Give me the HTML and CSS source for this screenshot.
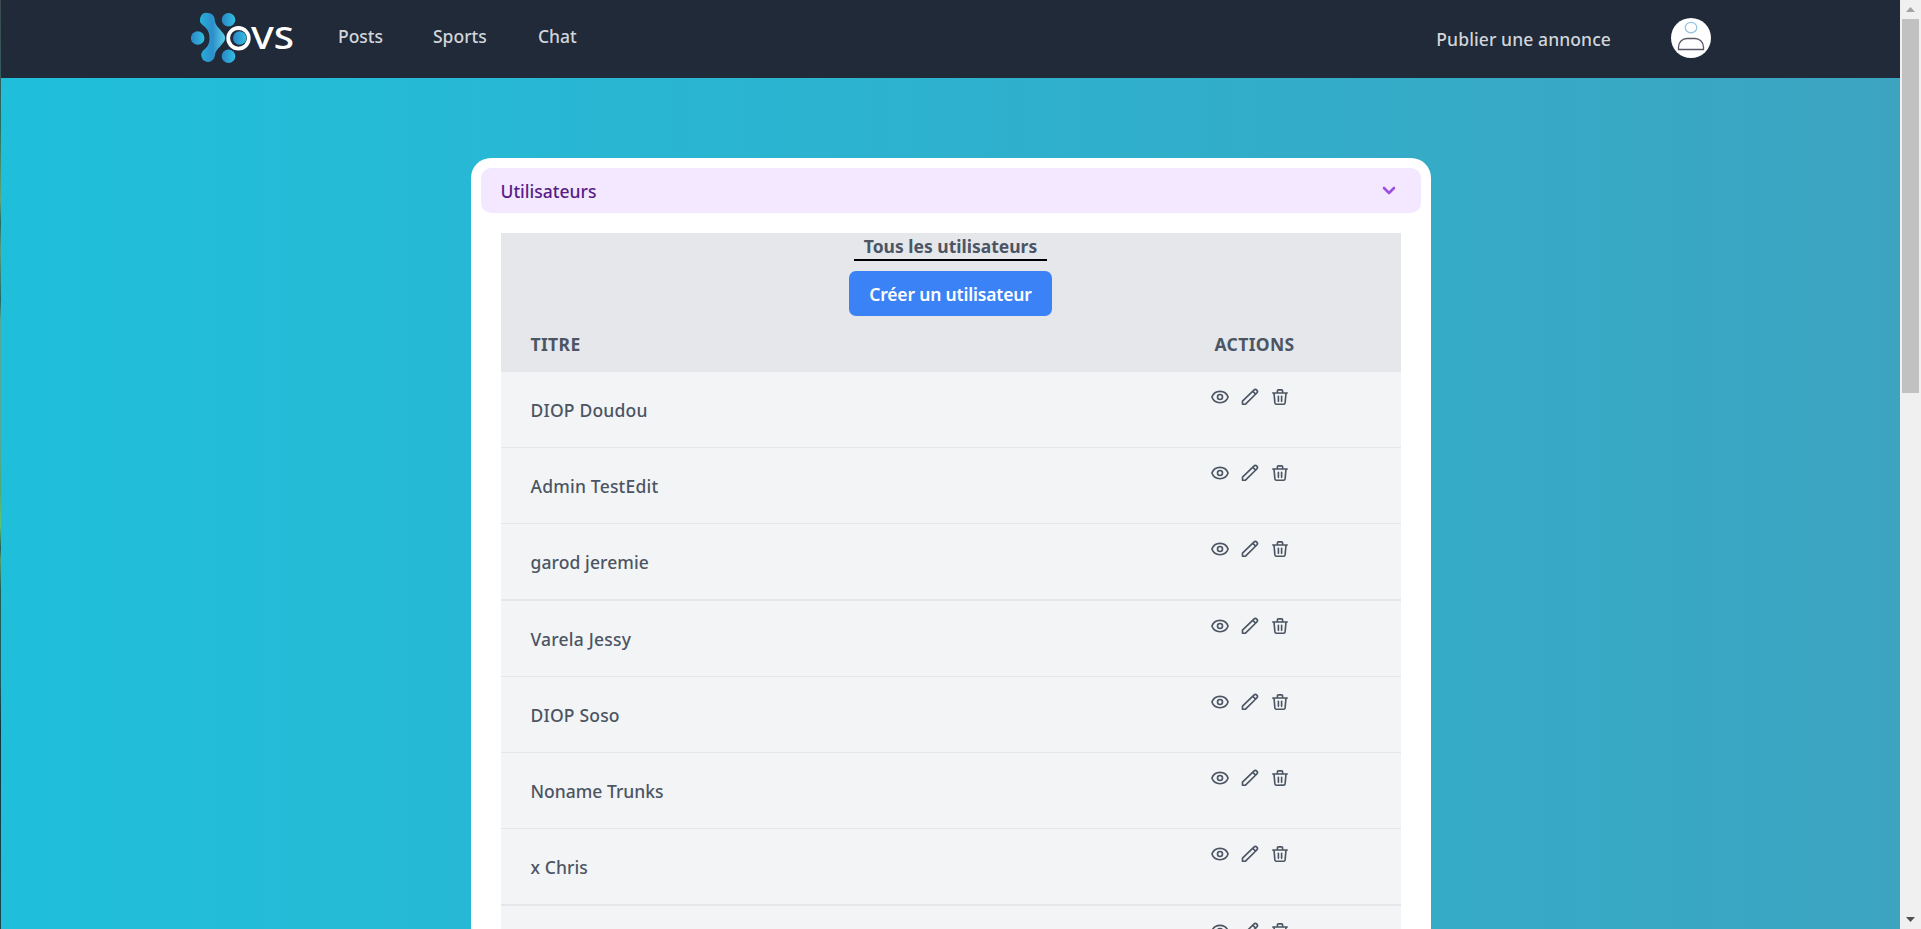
FILE: index.html
```html
<!DOCTYPE html>
<html lang="fr">
<head>
<meta charset="utf-8">
<title>OVS</title>
<link rel="stylesheet" href="styles.css">
</head>
<body>
<svg class="defs" width="0" height="0" aria-hidden="true">
  <symbol id="eye" viewBox="0 0 20 20"><path d="M1.900 10C3.200 6.400 6.300 4.300 10 4.300s6.800 2.100 8.100 5.700c-1.300 3.600-4.400 5.700-8.100 5.700S3.200 13.600 1.900 10z"/><circle cx="10" cy="10" r="2.500"/></symbol>
  <symbol id="pencil" viewBox="0 0 20 20"><path d="M12.800 4.300l2.900 2.900M13.900 3.100a2.050 2.050 0 0 1 2.900 2.900L5.500 17.200H2.500v-3L13.900 3.100z"/></symbol>
  <symbol id="trash" viewBox="0 0 20 20"><path d="M2.800 6h14.400M4 6l.9 9.900a1.500 1.500 0 0 0 1.500 1.300h7.200a1.500 1.500 0 0 0 1.500-1.300L16 6M7.400 6V3.800c0-.6.400-1 1-1h3.200c.6 0 1 .4 1 1V6M8.400 9.300v5M11.600 9.300v5"/></symbol>
</svg>
<div class="window">
  <div class="edge"></div>
  <div class="page">
    <header class="header">
      <svg class="logo" viewBox="0 0 106 54" role="img" aria-label="OVS">
        <defs><linearGradient id="blue" x1="0" x2="1"><stop offset="0" stop-color="#2b86c5"/><stop offset="1" stop-color="#31bfe2"/></linearGradient>
        <linearGradient id="stem" x1="0" x2="1"><stop offset="0" stop-color="#27aeda"/><stop offset=".5" stop-color="#2b8fcb"/><stop offset="1" stop-color="#5fd0e6"/></linearGradient></defs>
        <circle cx="6.700" cy="26" r="6.800" fill="url(#blue)"/>
        <circle cx="37.500" cy="7.800" r="6.800" fill="url(#blue)"/>
        <circle cx="37.500" cy="44.200" r="6.800" fill="url(#blue)"/>
        <path fill="url(#stem)" d="M17 1a6.800 6.800 0 0 1 6.800 7c.2 7.500 10.400 12 10.400 18s-10.200 10.500-10.400 18A6.800 6.800 0 1 1 11.800 38.800C15.500 36 18.500 33 18.500 26S15.500 16 11.800 13.200A6.800 6.800 0 0 1 17 1z"/>
        <circle cx="47.500" cy="26.300" r="10.300" fill="#202a38" stroke="#fff" stroke-width="3.800"/>
        <circle cx="48.700" cy="26" r="6.700" fill="url(#blue)"/>
        <text x="60" y="37" class="logo-text" textLength="43" lengthAdjust="spacingAndGlyphs">VS</text>
      </svg>
      <nav class="nav"><a class="posts">Posts</a><a class="sports">Sports</a><a class="chat">Chat</a></nav>
      <a class="publish">Publier une annonce</a>
      <svg class="avatar" viewBox="0 0 40 40"><circle cx="20" cy="20" r="20" fill="#fff"/><ellipse cx="20" cy="9.600" rx="5.800" ry="5.200" fill="none" stroke="#8fc3df" stroke-width="1.200"/><path d="M7.500 31.500V29a8.500 8.500 0 0 1 8.500-8.500h8a8.500 8.500 0 0 1 8.500 8.500v2.500z" fill="none" stroke="#5a5666" stroke-width="1.300"/></svg>
    </header>
    <main class="main">
      <section class="card">
        <div class="accordion"><span>Utilisateurs</span><svg class="chevron" viewBox="0 0 20 20"><path d="M5 7l5 5 5-5"/></svg></div>
        <div class="table">
          <div class="table-head">
            <h2 class="title">Tous les utilisateurs</h2>
            <a class="create">Créer un utilisateur</a>
            <div class="columns"><span class="col-title">TITRE</span><span class="col-actions">ACTIONS</span></div>
          </div>
          <div class="row"><span class="wide">DIOP Doudou</span><div class="actions"><svg><use href="#eye"/></svg><svg><use href="#pencil"/></svg><svg><use href="#trash"/></svg></div></div>
          <div class="row"><span class="wide">Admin TestEdit</span><div class="actions"><svg><use href="#eye"/></svg><svg><use href="#pencil"/></svg><svg><use href="#trash"/></svg></div></div>
          <div class="row"><span class="medium">garod jeremie</span><div class="actions"><svg><use href="#eye"/></svg><svg><use href="#pencil"/></svg><svg><use href="#trash"/></svg></div></div>
          <div class="row"><span class="wide">Varela Jessy</span><div class="actions"><svg><use href="#eye"/></svg><svg><use href="#pencil"/></svg><svg><use href="#trash"/></svg></div></div>
          <div class="row"><span class="wide">DIOP Soso</span><div class="actions"><svg><use href="#eye"/></svg><svg><use href="#pencil"/></svg><svg><use href="#trash"/></svg></div></div>
          <div class="row"><span>Noname Trunks</span><div class="actions"><svg><use href="#eye"/></svg><svg><use href="#pencil"/></svg><svg><use href="#trash"/></svg></div></div>
          <div class="row"><span class="medium">x Chris</span><div class="actions"><svg><use href="#eye"/></svg><svg><use href="#pencil"/></svg><svg><use href="#trash"/></svg></div></div>
          <div class="row"><span></span><div class="actions"><svg><use href="#eye"/></svg><svg><use href="#pencil"/></svg><svg><use href="#trash"/></svg></div></div>
        </div>
      </section>
    </main>
  </div>
  <div class="scrollbar"><svg class="arrow" viewBox="0 0 21 19"><path d="M6 12l4.500-5 4.500 5z" fill="#a3a3a3"/></svg><div class="thumb"></div><svg class="arrow down" viewBox="0 0 21 19"><path d="M6 7l4.500 5 4.500-5z" fill="#505050"/></svg></div>
</div>
</body>
</html>
```
FILE: styles.css
```css
* { box-sizing: border-box; }
body { margin: 0; overflow: hidden; font-family: "Noto Sans", "Open Sans", sans-serif; font-size: 17.5px; line-height: 24px; color: #4b5563; }
.defs { position: absolute; }
.window { display: flex; height: 929px; overflow: hidden; }
.edge { width: 1px; background: linear-gradient(#3c4a50 0, #33605f 90px, #227060 125px, #60a878 200px, #206a68 222px, #55a080 250px, #206868 300px, #55a898 320px, #55a898 440px, #50a870 490px, #60c870 525px, #206058 548px, #50a070 560px, #206058 590px, #205860 680px, #103540 730px, #184850); }
.page { width: 1899px; display: flex; flex-direction: column; overflow: hidden; background: linear-gradient(90deg, #1fbfdb, #3ca4c1); }
.header { flex: none; height: 78px; display: flex; align-items: flex-start; background: #202a38; color: #d1d5db; font-weight: 500; }
.logo { width: 106px; height: 54px; margin: 12px 0 0 190px; }
.logo-text { font: 600 30px "Open Sans", sans-serif; fill: #fff; }
.nav { display: flex; margin: 24px 0 0 41px; }
.nav a { flex: none; }
.posts { width: 95px; }
.sports { width: 105px; }
.publish { margin: 27px 0 0 auto; letter-spacing: .1px; }
.avatar { width: 40px; height: 40px; margin: 18px 189px 0 60px; }
.main { flex: 1; min-height: 0; display: flex; justify-content: center; align-items: flex-start; padding-top: 80px; }
.card { width: 960px; padding: 10px 10px 40px; border-radius: 20px; background: #fff; }
.accordion { height: 45px; display: flex; align-items: center; justify-content: space-between; padding: 0 22px 0 20px; border-radius: 10px; background: #f3e8ff; color: #581c87; font-weight: 500; }
.chevron { width: 20px; height: 20px; fill: none; stroke: #9b51e0; stroke-width: 2.600; stroke-linecap: round; stroke-linejoin: round; }
.table { margin: 20px 20px 0; background: #f3f4f6; }
.table-head { height: 139px; display: flex; flex-direction: column; align-items: center; background: #e5e7eb; font-weight: 700; }
.title { margin: 0; height: 28px; padding: 1px 10px 0; border-bottom: 2px solid #000; font-size: inherit; line-height: 24px; }
.create { width: 203px; height: 45px; margin-top: 10px; padding-top: 11px; border-radius: 7px; background: #3b82f6; color: #fff; font-weight: 600; letter-spacing: -.17px; text-align: center; white-space: nowrap; }
.columns { align-self: stretch; display: flex; padding: 16px 0 0 30px; letter-spacing: .35px; }
.col-title { width: 684px; }
.row { height: 76px; display: flex; border-bottom: 1px solid #e5e7eb; padding-left: 30px; font-weight: 500; }
.row:nth-child(4n+4) { height: 77px; border-bottom-width: 2px; }
.row > span { width: 679px; padding-top: 26px; }
.row > .wide { letter-spacing: .2px; }
.row > .medium { letter-spacing: .1px; }
.actions { display: flex; gap: 10px; padding-top: 15px; }
.actions svg { width: 20px; height: 20px; fill: none; stroke: #4b5563; stroke-width: 1.650; stroke-linecap: round; stroke-linejoin: round; }
.scrollbar { width: 21px; display: flex; flex-direction: column; align-items: center; background: #f0f0f0; }
.arrow { width: 21px; height: 19px; }
.thumb { width: 17px; height: 374px; background: #c1c1c1; }
.down { margin-top: auto; }
```
